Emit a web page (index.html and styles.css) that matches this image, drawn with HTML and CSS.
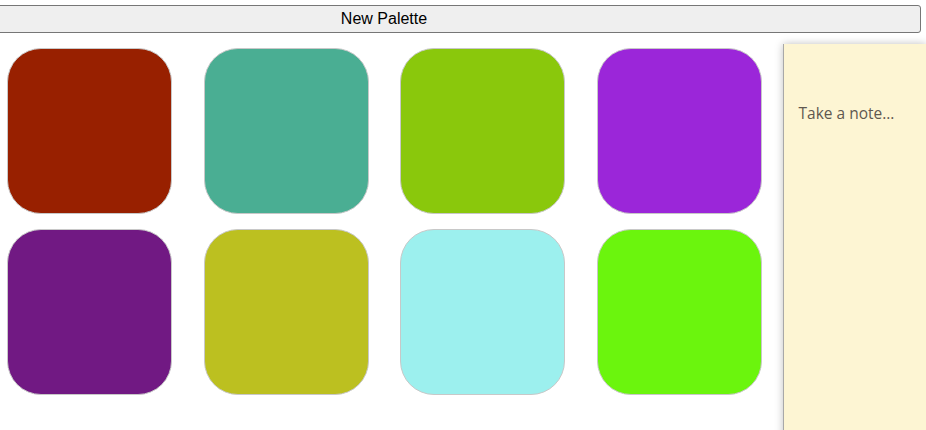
FILE: index.html
```html
<!DOCTYPE html>
<html>
<head>
<meta charset="utf-8">
<link rel="stylesheet" href="styles.css">
</head>
<body>
<div class="bar"><button class="new-btn">New Palette</button></div>
<div class="main">
  <div class="grid">
    <div class="swatch c1"></div>
    <div class="swatch c2"></div>
    <div class="swatch c3"></div>
    <div class="swatch c4"></div>
    <div class="swatch c5"></div>
    <div class="swatch c6"></div>
    <div class="swatch c7"></div>
    <div class="swatch c8"></div>
  </div>
  <div class="note"><div class="note-text">Take a note...</div></div>
</div>
</body>
</html>
```

FILE: styles.css
```css
html, body { margin: 0; padding: 0; background: #fff; overflow: hidden; height: 430px; }
.bar { padding-top: 5px; height: 28px; overflow: visible; }
.new-btn {
  display: block;
  margin-left: -153px;
  width: 1074px;
  height: 28px;
  box-sizing: border-box;
  border: 1px solid #767676;
  border-radius: 3px;
  background: #efefef;
  font-family: "Liberation Sans", Arial, sans-serif;
  font-size: 16px;
  color: #000;
  padding: 0;
}
.main { display: flex; align-items: flex-start; margin-top: 11px; }
.grid {
  display: grid;
  grid-template-columns: repeat(4, 165px);
  column-gap: 31.5px;
  row-gap: 15px;
  padding-left: 7px;
  padding-top: 4px;
}
.swatch {
  width: 165px; height: 166px; box-sizing: border-box;
  border: 1px solid #c8c8c8; border-radius: 34px;
}
.c1 { background: #982000; }
.c2 { background: #4aae93; }
.c3 { background: #8ac80c; }
.c4 { background: #9b26d9; }
.c5 { background: #711983; }
.c6 { background: #bcc020; }
.c7 { background: #9cf0ee; }
.c8 { background: #6bf50d; }
.note {
  margin-left: 21px;
  flex: 1;
  height: 400px;
  background: #fdf5d3;
  border-left: 1px solid #a8a8a8;
  box-shadow: 0 0 8px rgba(0,0,0,0.25);
}
.note-text {
  padding: 58px 0 0 15px;
  font-family: "Open Sans", "Noto Sans", sans-serif;
  font-size: 15.5px;
  color: #5f5850;
}
```
